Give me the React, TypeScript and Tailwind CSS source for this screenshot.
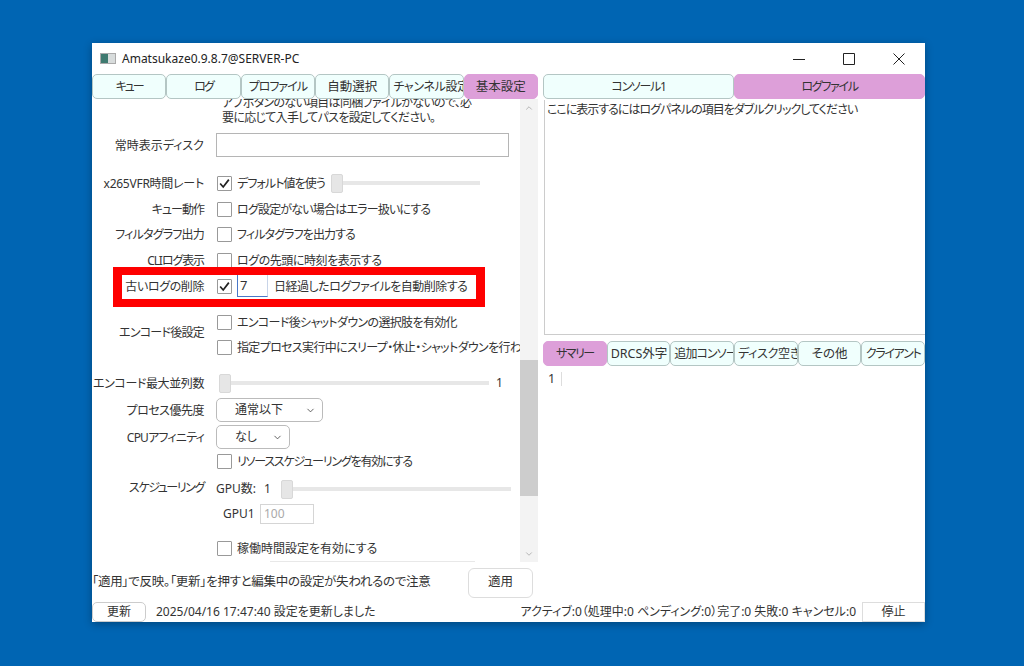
import { ChevronDown, ChevronUp } from "lucide-react";

const leftTabs = [
  { label: "キュー", cls: "text-[12px] tracking-[-2px]" },
  { label: "ログ", cls: "text-[12px] tracking-[-2px]" },
  { label: "プロファイル", cls: "text-[12px] tracking-[-1px]" },
  { label: "自動選択", cls: "" },
  { label: "チャンネル設定", cls: "text-[12px] tracking-[-0.3px]" },
  { label: "基本設定", cls: "", active: true },
];
const logTabs = [
  { label: "サマリー", cls: "text-[12px] tracking-[-1.5px]", active: true },
  { label: "DRCS外字", cls: "" },
  { label: "追加コンソール", cls: "text-[12px] tracking-[-0.9px]" },
  { label: "ディスク空き", cls: "text-[12px] tracking-[-0.3px]" },
  { label: "その他", cls: "" },
  { label: "クライアント", cls: "text-[12px] tracking-[-1.3px]" },
];

function Tab({ label, active, cls }: { label: string; active?: boolean; cls?: string }) {
  return (
    <div
      className={
        "h-[25px] min-w-0 flex-1 overflow-hidden whitespace-nowrap rounded-[5px] border px-[3px] text-center leading-[24px] " +
        (active ? "border-[#dd9fd9] bg-[#dd9fd9] " : "border-[#b4c6c4] bg-[#f0fffd] ") +
        (cls ?? "")
      }
    >
      {label}
    </div>
  );
}

function Check({ checked }: { checked?: boolean }) {
  return (
    <span className="ml-px flex h-[15px] w-[15px] shrink-0 items-center justify-center rounded-[1px] border border-[#999] bg-white">
      {checked && (
        <svg viewBox="0 0 15 15" className="h-[15px] w-[15px]" fill="none" stroke="#222" strokeWidth="2">
          <path d="M2.5 7.5 L6 11.5 L12.5 3" />
        </svg>
      )}
    </span>
  );
}

function Label({ children, cls }: { children?: React.ReactNode; cls?: string }) {
  return <div className={"w-[113px] shrink-0 whitespace-nowrap pr-px pt-px text-right " + (cls ?? "")}>{children}</div>;
}

function Row({ label, labelCls, height, children, className }: { label?: string; labelCls?: string; height: string; children?: React.ReactNode; className?: string }) {
  return (
    <div className={"flex items-center gap-[11px] " + height + " " + (className ?? "")}>
      <Label cls={labelCls}>{label}</Label>
      {children}
    </div>
  );
}

function CheckText({ text, checked, cls }: { text: string; checked?: boolean; cls?: string }) {
  return (
    <div className="flex items-center gap-[5px] whitespace-nowrap">
      <Check checked={checked} />
      <span className={"pt-px " + (cls ?? "")}>{text}</span>
    </div>
  );
}

function Slider({ width }: { width: string }) {
  return (
    <div className={"flex h-[19px] items-center " + width}>
      <div className="h-[19px] w-[12px] shrink-0 rounded-[2px] border border-[#d8d8d8] bg-[#e6e6e6]" />
      <div className="h-[4px] flex-1 bg-[#e7e7e7]" />
    </div>
  );
}

function Select({ text, width }: { text: string; width: string }) {
  return (
    <div className={"flex h-[24px] items-center justify-between rounded-[5px] border border-[#bbb] bg-white pl-[18px] pr-[6px] " + width}>
      <span>{text}</span>
      <ChevronDown size={11} strokeWidth={1.8} className="text-[#444]" />
    </div>
  );
}

export default function App() {
  return (
    <div className="h-[666px] w-[1024px] overflow-hidden bg-[#0065b3] pl-[92px] pt-[43px] text-[12.5px] text-[#333] [font-family:'Noto_Sans','Noto_Sans_CJK_JP',sans-serif] [font-feature-settings:'palt']">
      <div className="flex h-[579px] w-[833px] flex-col bg-white shadow-[0_2px_8px_rgba(0,0,0,0.3)]">
        {/* title bar */}
        <div className="flex h-[31px] shrink-0 items-center pl-[8px]">
          <div className="flex h-[11px] w-[16px] overflow-hidden border border-[#aaa] bg-[#d8dcdc]">
            <div className="w-[7px] bg-[#3f7a70]" />
          </div>
          <span className="ml-[6px] whitespace-nowrap text-[12px] text-[#222]">Amatsukaze0.9.8.7@SERVER-PC</span>
          <div className="ml-auto mr-[20px] flex items-center gap-[38px]">
            <svg viewBox="0 0 12 12" className="h-[12px] w-[12px]" stroke="#222" strokeWidth="1">
              <path d="M0 6.5H12" />
            </svg>
            <svg viewBox="0 0 12 12" className="h-[12px] w-[12px]" fill="none" stroke="#222" strokeWidth="1">
              <path d="M.5 .5H11.5V11.5H.5Z" />
            </svg>
            <svg viewBox="0 0 12 12" className="h-[12px] w-[12px]" stroke="#222" strokeWidth="1">
              <path d="M.5 .5L11.5 11.5M11.5 .5L.5 11.5" />
            </svg>
          </div>
        </div>

        <div className="flex min-h-0 flex-1">
          {/* left pane */}
          <div className="flex w-[446px] shrink-0 flex-col">
            <div className="flex h-[25px] shrink-0">
              {leftTabs.map((t) => (
                <Tab key={t.label} label={t.label} active={t.active} cls={t.cls} />
              ))}
            </div>
            <div className="flex h-[463px] shrink-0">
              <div className="h-full w-[428px] shrink-0 overflow-hidden text-[12px]">
                <div className="-mt-[4px] pl-[130px] leading-[15px] tracking-[-0.7px]">
                  <div className="whitespace-nowrap">アプボタンのない項目は同梱ファイルがないので、必</div>
                  <div className="whitespace-nowrap">要に応じて入手してパスを設定してください。</div>
                </div>
                <Row label="常時表示ディスク" height="h-[24px]" className="mt-[8px]">
                  <div className="h-[24px] w-[293px] border border-[#b5b5b5] bg-white" />
                </Row>
                <Row label="x265VFR時間レート" labelCls="tracking-[-0.25px]" height="h-[26px]" className="mt-[13px]">
                  <CheckText text="デフォルト値を使う" checked cls="tracking-[-0.9px]" />
                  <Slider width="w-[149px] ml-[-5px]" />
                </Row>
                <Row label="キュー動作" labelCls="tracking-[-1px]" height="h-[26px]">
                  <CheckText text="ログ設定がない場合はエラー扱いにする" cls="tracking-[-0.8px]" />
                </Row>
                <Row label="フィルタグラフ出力" labelCls="tracking-[-0.8px]" height="h-[25px]">
                  <CheckText text="フィルタグラフを出力する" cls="tracking-[-0.9px]" />
                </Row>
                <Row label="CLIログ表示" labelCls="tracking-[-1.1px]" height="h-[26px]">
                  <CheckText text="ログの先頭に時刻を表示する" cls="tracking-[-0.45px]" />
                </Row>
                <Row label="古いログの削除" labelCls="tracking-[-0.4px]" height="h-[26px]" className="relative">
                  <div className="flex items-center gap-[5px] whitespace-nowrap">
                    <Check checked />
                    <div className="h-[22px] w-[31px] border-b border-l border-r border-[#4a78c8] border-r-[#c8d4e8] pl-[2px] text-[13px] leading-[20px]">7</div>
                    <span className="ml-px pt-px tracking-[-0.5px]">日経過したログファイルを自動削除する</span>
                  </div>
                  <div className="pointer-events-none absolute -top-[6px] left-[21px] h-[40px] w-[372px] border-[8px] border-[#fe0000] border-x-[9px]" />
                </Row>
                <div className="mt-[10px] flex gap-[11px]">
                  <div className="mt-[14px]">
                    <Label cls="tracking-[-0.75px]">エンコード後設定</Label>
                  </div>
                  <div>
                    <div className="flex h-[26px] items-center">
                      <CheckText text="エンコード後シャットダウンの選択肢を有効化" cls="tracking-[-0.65px]" />
                    </div>
                    <div className="flex h-[25px] items-center">
                      <CheckText text="指定プロセス実行中にスリープ・休止・シャットダウンを行わない" cls="tracking-[-0.65px]" />
                    </div>
                  </div>
                </div>
                <Row label="エンコード最大並列数" labelCls="tracking-[-0.4px]" height="h-[26px]" className="mt-[10px]">
                  <Slider width="w-[270px] ml-[3px]" />
                  <span className="ml-[-4px]">1</span>
                </Row>
                <Row label="プロセス優先度" labelCls="tracking-[-0.5px]" height="h-[26px]" className="mt-px">
                  <Select text="通常以下" width="w-[107px]" />
                </Row>
                <Row label="CPUアフィニティ" labelCls="tracking-[-0.8px]" height="h-[26px]" className="mt-px">
                  <Select text="なし" width="w-[74px]" />
                </Row>
                <Row height="h-[23px]">
                  <CheckText text="リソーススケジューリングを有効にする" cls="tracking-[-1.2px]" />
                </Row>
                <div className="mt-[3px] flex h-[26px] gap-[11px]">
                  <div className="mt-[2px]">
                    <Label cls="tracking-[-1.4px]">スケジューリング</Label>
                  </div>
                  <div className="flex items-center whitespace-nowrap">
                    <span className="w-[48px]">GPU数:</span>
                    <span className="w-[17px]">1</span>
                    <Slider width="w-[230px]" />
                  </div>
                </div>
                <div className="mt-px flex h-[22px] items-center pl-[131px]">
                  <span className="w-[37px]">GPU1</span>
                  <div className="flex h-[20px] w-[54px] items-center border border-[#d5d5d5] pl-[3px] text-[#aaa]">100</div>
                </div>
                <Row height="h-[26px]" className="mt-[10px]">
                  <CheckText text="稼働時間設定を有効にする" />
                </Row>
                <div className="ml-[178px] h-px w-[205px] bg-[#e8e8e8]" />
              </div>
              {/* scrollbar */}
              <div className="flex h-full w-[18px] flex-col bg-[#f3f3f3]">
                <div className="flex h-[17px] items-center justify-center">
                  <ChevronUp size={10} className="text-[#aaa]" />
                </div>
                <div className="mt-[244px] h-[136px] bg-[#cdcdcd]" />
                <div className="mt-auto flex h-[17px] items-center justify-center">
                  <ChevronDown size={10} className="text-[#aaa]" />
                </div>
              </div>
            </div>
            <div className="flex min-h-0 flex-1 items-center justify-between pr-[5px] pt-[3px]">
              <span className="whitespace-nowrap tracking-[-0.3px]">「適用」で反映。「更新」を押すと編集中の設定が失われるので注意</span>
              <div className="flex h-[30px] w-[65px] items-center justify-center rounded-[6px] border border-[#ddd]">適用</div>
            </div>
          </div>

          {/* right pane */}
          <div className="ml-[5px] flex min-w-0 flex-1 flex-col">
            <div className="flex h-[25px] shrink-0">
              <Tab label="コンソール1" cls="text-[12px] tracking-[-1.3px]" />
              <Tab label="ログファイル" active cls="text-[12px] tracking-[-1.3px]" />
            </div>
            <div className="ml-px mt-px h-[235px] shrink-0 border-b border-l border-[#ccc] pl-[2px] pt-[1px] text-[12px] leading-[17px] tracking-[-1px]">
              ここに表示するにはログパネルの項目をダブルクリックしてください
            </div>
            <div className="mt-[6px] flex h-[25px] shrink-0">
              {logTabs.map((t) => (
                <Tab key={t.label} label={t.label} active={t.active} cls={t.cls} />
              ))}
            </div>
            <div className="flex items-center pl-[5px] pt-[5px] leading-[16px]">
              <span>1</span>
              <div className="ml-[6px] h-[14px] w-px bg-[#ddd]" />
            </div>
          </div>
        </div>

        {/* status bar */}
        <div className="flex h-[22px] shrink-0 items-end text-[12px]">
          <div className="flex h-[20px] w-[54px] items-center justify-center rounded-[5px] border border-[#ccc] bg-white">更新</div>
          <span className="ml-[10px] whitespace-nowrap pb-px">2025/04/16 17:47:40 設定を更新しました</span>
          <span className="ml-auto whitespace-nowrap pb-px">アクティブ:0（処理中:0 ペンディング:0）完了:0 失敗:0 キャンセル:0</span>
          <div className="ml-[6px] flex h-[20px] w-[63px] items-center justify-center border border-[#ddd]">停止</div>
        </div>
      </div>
    </div>
  );
}
